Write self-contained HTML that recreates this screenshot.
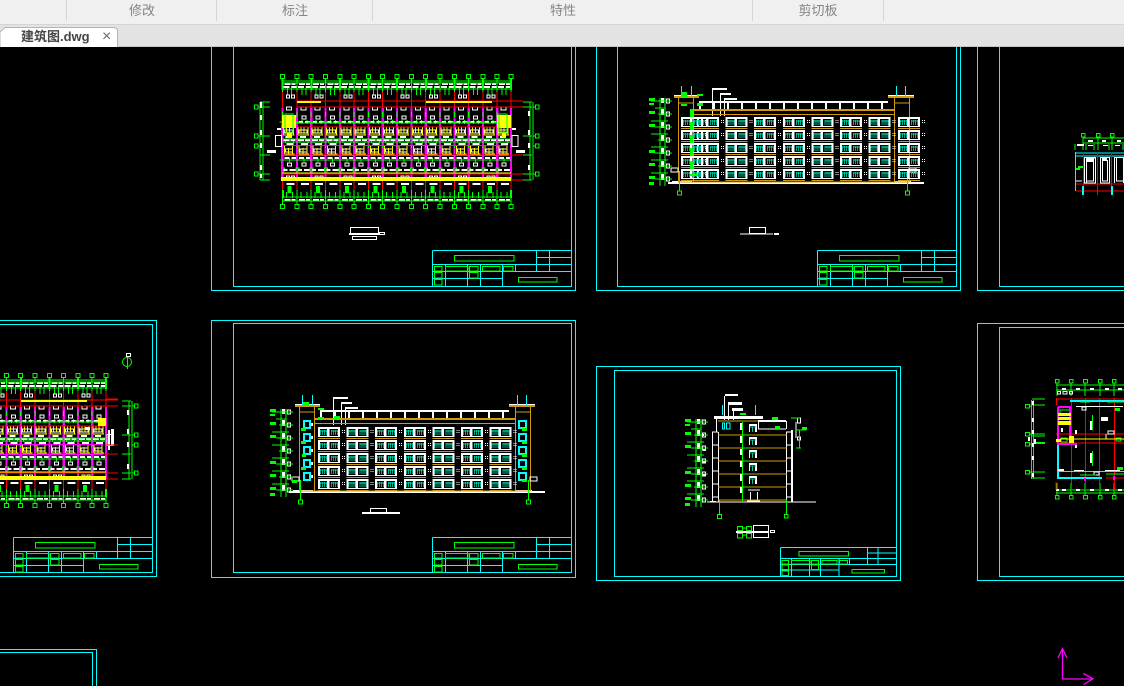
<!DOCTYPE html>
<html><head><meta charset="utf-8"><title>建筑图.dwg</title>
<style>
html,body{margin:0;padding:0;width:1124px;height:686px;overflow:hidden;background:#000;font-family:"Liberation Sans","Noto Sans CJK SC",sans-serif}
#cad{position:absolute;left:0;top:0}
#rib{position:absolute;left:0;top:0;width:1124px;height:24px;background:#f0f0f0;border-bottom:1px solid #d4d4d4}
#rib i{position:absolute;top:0;height:21px;width:1px;background:#d6d6d6}
#rib span{position:absolute;top:2px;font-size:13px;line-height:17px;color:#858585;transform:translateX(-50%);white-space:nowrap}
#tabs{position:absolute;left:0;top:25px;width:1124px;height:21px;background:#e3e3e3;border-bottom:1px solid #c4c4c4}
#tabsvg{position:absolute;left:0;top:0}
#tt{position:absolute;left:21px;top:3px;font-size:13px;line-height:17px;font-weight:700;color:#454545;white-space:nowrap}
#tx{position:absolute;left:102px;top:3px;font-size:16px;line-height:17px;color:#6a6a6a}
</style></head><body>
<svg id="cad" width="1124" height="686" viewBox="0 0 1124 686" shape-rendering="crispEdges" fill="none">
<defs>
<!-- title block -->
<g id="tb">
<path stroke="#0ff" d="M.5 .5H139 M.5 .5V36 M104.500 .5V21 M117.500 .5V21 M104.500 7.500H139 M.5 14.500H139 M.5 21.500H139 M.5 28.500H70 M13.500 14.500V36 M35.500 14.500V36 M48.500 14.500V36 M70.500 14.500V36 M83.500 14.500V21" vector-effect="non-scaling-stroke"/>
<path stroke="#0f0" d="M22.500 5.500H82V11H22.500Z M2.500 16.500H10V21H2.500Z M2.500 22.500H10V28H2.500Z M2.500 29.500H10V35H2.500Z M13.500 16.500H36V21H13.500Z M37.500 16.500H46V21H37.500Z M37.500 22.500H46V28H37.500Z M50.500 16.500H68V21H50.500Z M71.500 16.500H81V21H71.500Z M86.500 27.500H125V32H86.500Z" vector-effect="non-scaling-stroke"/>
</g>
<!-- plan bay -->
<g id="pb">
<path stroke="#f00" d="M0 92V190"/>
<path fill="#f0f" d="M-1 108h2.200v72h-2.200z"/>
<path stroke="#0f0" d="M-2 74.500h4v4h-4z M-2 204.500h4v4h-4z M0 78V92 M0 190V204 M5 86V95 M9 86V95 M4 192V198 M10 192V198 M0 112v5 M-3 122h6 M5 120v4 M10 120v4 M-3 160h6 M7 158v4 M0 145v3 M3 139v4 M11 139v4 M-1 168h3v3h-3z"/>
<path stroke="#fff" stroke-width="2" d="M2 84h6 M9 84h4 M1 87h6 M9 87h5 M2 122h4 M8 122h5 M1 140h6 M8 140h5 M2 158h5 M9 158h5 M1 170h4 M7 170h6 M2 200h6 M9 200h4 M4 184h8 M3 137h6 M4 144h7"/>
<path stroke="#fff" d="M5 116h4v3h-4z M5 163h4v3h-4z M4 107h5v3h-5z M2 130h8v3h-8z M3 149h7v3h-7z"/>
<path stroke="#ff0" d="M1 127V135 M4 127V133 M7 127V133 M11 127V135 M1 135H12 M2 146V154 M6 148V154 M10 146V154 M2 154H12"/>
</g>
<g id="pb2"><use href="#pb"/><use href="#pb" x="14.310"/><path stroke="#fff" d="M4 95h3v3h-3z M9 95h3v3h-3z M4 176h3v3h-3z M9 176h3v3h-3z"/><path fill="#0f0" d="M5 186h4v7h-4z"/></g>
<g id="pb4"><use href="#pb2"/><use href="#pb2" x="28.620"/><path fill="#0f0" d="M27.800 79h2v11h-2z M-1 79h2v11h-2z"/></g>
<g id="pb8"><use href="#pb4"/><use href="#pb4" x="57.250"/></g>
<g id="plan">
<g transform="translate(282.500 0)"><use href="#pb8"/><use href="#pb8" x="114.500"/></g>
<path stroke="#f00" d="M511 92V190"/>
<path fill="#f0f" d="M510 108h2v72h-2z M281 125h2v55h-2z"/>
<path stroke="#0f0" d="M509 74.500h4v4h-4z M509 204.500h4v4h-4z M511 78V92 M511 190V204"/>
<path fill="#0f0" d="M510 79h2v11h-2z M510 190h2v8h-2z M282 190h2v8h-2z"/>
<path stroke="#0f0" d="M282 81H511 M282 83H511 M282 89H511 M282 197H511 M282 201H511 M282 139H511 M282 142H511 M282 123H505 M282 160H511 M282 173H511"/>
<path stroke="#f00" d="M297 101H523 M297 107H523 M283 174H523 M283 180H523 M297 127H510 M283 155H523"/>
<path stroke="#ff0" d="M282 173H511"/>
<path fill="#ff0" d="M281 177h230v4h-230z M297 101h24v2h-24z M426 101h66v2h-66z"/>
<path fill="#f0f" d="M283 145h225v1h-225z M283 155h225v1h-225z"/>
</g>
<g id="planEnds">
<path fill="#ff0" d="M282 115h14v13h-14z M497 115h14v13h-14z M287 132h5v6h-5z M502 132h4v6h-4z"/>
<path stroke="#0f0" d="M285 114h8v18h-8z M499 114h8v18h-8z"/>
<path stroke="#fff" d="M275.500 135.500h6v11h-6z M512 135.500h6v11h-6z"/>
<path fill="#fff" d="M267 150h9v3h-9z M516 150h9v3h-9z M277 128h4v2h-4z M512 128h4v2h-4z"/>
</g>
<g id="planLeft">
<path stroke="#0f0" d="M254.500 105h3.500v4h-3.500z M254.500 134h3.500v4h-3.500z M254.500 144h3.500v4h-3.500z M254.500 172h3.500v4h-3.500z M260 102V180 M263 102V180 M258 107H260 M258 136H260 M258 146H260 M258 174H260 M260 102H270 M260 107H270 M260 136H270 M260 155H270 M260 174H270 M260 180H270"/>
<path fill="#fff" d="M260 102h2v6h-2z M260 115h2v5h-2z M260 130h2v5h-2z M260 143h2v5h-2z M260 165h2v5h-2z M260 174h2v4h-2z"/>
</g>
<g id="planRight">
<path stroke="#0f0" d="M535.500 105h3.500v4h-3.500z M535.500 134h3.500v4h-3.500z M535.500 144h3.500v4h-3.500z M535.500 172h3.500v4h-3.500z M530 102V180 M533 102V180 M533 107H536 M533 136H536 M533 146H536 M533 174H536 M523 102H532 M523 107H532 M523 136H532 M523 155H532 M523 174H532 M523 180H532"/>
<path fill="#fff" d="M528 111h2v5h-2z M528 130h2v5h-2z M528 143h2v5h-2z M528 165h2v5h-2z"/>
</g>
<!-- facade floor -->
<g id="fl">
<path fill="#fff" d="M0 0h10v2H0z M11 0h11v2H11z M0 0h2v10H0z M9 0h2.500v10H9z M20 0h2v10h-2z M0 9h22v1H0z"/>
<path stroke="#00a890" stroke-width="5" stroke-dasharray="1 1" d="M2 5.500h7 M13 5.500h7"/>
<path stroke="#00e0a0" d="M2 4h7 M13 4h7"/>
<path stroke="#d09a10" d="M0 11.500H22"/>
<path fill="#fff" d="M24 3h1v1h-1z M26 3h1v1h-1z M24 5h1v1h-1z M26 5h1v1h-1z"/>
</g>
<g id="col"><use href="#fl"/><use href="#fl" y="13"/><use href="#fl" y="26"/><use href="#fl" y="39"/><use href="#fl" y="52"/></g>
<g id="cols"><use href="#col"/><use href="#col" x="28.600"/><use href="#col" x="57.200"/><use href="#col" x="85.800"/><use href="#col" x="114.400"/><use href="#col" x="143"/><use href="#col" x="171.600"/></g>
<!-- left dim strip, 5 spans -->
<g id="dim">
<path stroke="#0f0" d="M0 0V88 M5 0V88"/>
<path fill="#fff" d="M1 0h3v5H1z M1 11h3v6H1z M1 24h3v6H1z M1 37h3v6H1z M1 50h3v6H1z M1 63h3v6H1z M1 76h3v6H1z"/>
<path stroke="#fff" d="M6.500 1h3v4h-3z M6.500 14h3v4h-3z M6.500 27h3v4h-3z M6.500 40h3v4h-3z M6.500 53h3v4h-3z M6.500 66h3v4h-3z M6.500 79h3v4h-3z"/>
<path stroke="#0f0" d="M-9 3H12 M-5 10H5 M-2 16H12 M-9 23H8 M-5 29H12 M-9 36H8 M-2 42H12 M-9 49H8 M-5 55H12 M-9 62H8 M-2 68H12 M-9 75H8 M-5 81H12"/>
<path fill="#0f0" d="M-11 0h6v3h-6z M-11 5h5v2h-5z M-11 13h6v3h-6z M-11 26h6v3h-6z M-11 52h6v3h-6z M-11 65h6v3h-6z M-11 78h6v3h-6z M-11 84h5v3h-5z"/>
</g>
<g id="elev">
<path stroke="#fff" stroke-width="2" d="M289 492H545"/>
<path fill="#fff" d="M320 410h189v2H320z M333 397h15v2h-15z M341 402h11v2h-11z M345 407h13v2h-13z M295 404h25v1h-25z M509 404h26v1h-26z M293 490h20v2h-20z M516 490h16v2h-16z"/>
<path stroke="#fff" d="M333.500 399V425 M341.500 404V425 M345.500 409V425 M334 419H340"/>
<path stroke="#fff" stroke-width="2" d="M321 411V419 M335 411V419 M349 411V419 M363 411V419 M377 411V419 M391 411V419 M405 411V419 M419 411V419 M433 411V419 M447 411V419 M461 411V419 M475 411V419 M489 411V419 M503 411V419"/>
<path fill="#d09a10" d="M314 418h201v2H314z M295 405h25v2h-25z M509 405h26v2h-26z M314 423h201v1H314z"/>
<path stroke="#d09a10" d="M299.500 407V491 M314.500 407V491 M515.500 407V491 M530.500 407V491 M299 491H530 M299 412H314 M515 412H530"/>
<path stroke="#0ff" d="M302.500 395V405 M312.500 395V405 M517.500 395V405 M526.500 395V405"/>
<path stroke="#0f0" d="M300.500 480V500 M528.500 480V500 M298.500 500h4v4h-4z M526.500 500h4v4h-4z"/>
<path stroke="#fff" d="M292 477h7v4h-7z M530 477h7v4h-7z"/>
</g>
</defs>

<!-- frames -->
<path stroke="#0ff" d="M211.500 0V290.500H575.500V0 M233.500 0V286.500H571.500V0"/>
<path stroke="#0ff" d="M596.500 0V290.500H960.500V0 M617.500 0V286.500H956.500V0"/>
<path stroke="#0ff" d="M977.500 0V290.500H1124 M999.500 0V286.500H1124"/>
<path stroke="#0ff" d="M0 320.500H156.500V576.500H0 M0 324.500H152.500V572.500H0"/>
<path stroke="#0ff" d="M211.500 320.500H575.500V577.500H211.500Z M233.500 323.500H571.500V572.500H233.500Z"/>
<path stroke="#0ff" d="M596.500 366.500H900.500V580.500H596.500Z M614.500 370.500H896.500V576.500H614.500Z"/>
<path stroke="#0ff" d="M1124 323.500H977.500V580.500H1124 M1124 327.500H999.500V576.500H1124"/>
<path stroke="#0ff" d="M0 649.500H96.500V686 M0 652.500H92.500V686"/>

<use href="#tb" x="432" y="250"/>
<use href="#tb" x="817" y="250"/>
<use href="#tb" x="13" y="537"/>
<use href="#tb" x="432" y="537"/>
<g transform="translate(780 547) scale(.835 .81)"><use href="#tb"/></g>

<!-- plan A -->
<use href="#plan"/><use href="#planEnds"/><use href="#planLeft"/><use href="#planRight"/>
<path stroke="#fff" d="M350.500 227.500h28v6h-28z M352.500 236.500h24v3h-24z M379.500 232.500h5v2h-5z"/>
<path stroke="#fff" stroke-width="2" d="M349 234H379"/>

<!-- plan D -->
<g transform="translate(-405 299)">
<use href="#plan"/>
<path fill="#ff0" d="M503 119h8v8h-8z"/>
<path stroke="#fff" d="M512 135.500h6v11h-6z"/>
<path fill="#fff" d="M490 128h5v3h-5z M516 130h3v16h-3z M513 131h2v20h-2z"/>
<path stroke="#f00" d="M511 100H523 M511 107H523 M511 146H523 M511 174H523 M511 180H523"/>
</g>
<g transform="translate(-401 299)"><use href="#planRight"/></g>
<path stroke="#0f0" d="M122.500 362a4.500 4.500 0 1 0 9 0a4.500 4.500 0 1 0-9 0 M127.500 356V369" shape-rendering="auto"/>
<path stroke="#fff" d="M126.500 353.500h4v3h-4z"/>

<!-- elevation E -->
<use href="#elev"/>
<g transform="translate(318 427)"><use href="#cols"/></g>
<use href="#dim" transform="translate(281 409)"/>
<path stroke="#0ff" stroke-width="2" d="M304 421h6v7h-6z M304 434h6v7h-6z M304 447h6v7h-6z M304 460h6v7h-6z M304 473h6v7h-6z M519 421h7v7h-7z M519 434h7v7h-7z M519 447h7v7h-7z M519 460h7v7h-7z M519 473h7v7h-7z"/>
<path fill="#0f0" d="M303 402h6v4h-6z M318 408h6v2h-6z M318 417h6v3h-6z M334 416h6v3h-6z M301 428h5v3h-5z M301 441h5v3h-5z M302 454h4v3h-4z M301 467h5v3h-5z M292 480h5v3h-5z M522 428h5v3h-5z M522 441h5v3h-5z M522 454h5v3h-5z M522 467h5v3h-5z M522 480h5v2h-5z"/>
<path fill="#fff" d="M311 423h2v3h-2z M311 436h2v3h-2z M311 449h2v3h-2z M311 462h2v3h-2z M311 475h2v3h-2z"/>
<path stroke="#fff" stroke-width="2" d="M362 513H400"/>
<path stroke="#fff" d="M370.500 508.500h16v5h-16z"/>

<!-- elevation B -->
<g transform="translate(379 -309)">
<use href="#elev"/>
<g transform="translate(318 426)"><use href="#cols"/></g>
<g transform="translate(302 426)"><use href="#fl"/><use href="#fl" y="13"/><use href="#fl" y="26"/><use href="#fl" y="39"/><use href="#fl" y="52"/></g>
<g transform="translate(519 426)"><use href="#fl"/><use href="#fl" y="13"/><use href="#fl" y="26"/><use href="#fl" y="39"/><use href="#fl" y="52"/></g>
<use href="#dim" transform="translate(281 407)"/>
<path fill="#0f0" d="M302 401h6v5h-6z M318 403h6v2h-6z M302 413h6v2h-6z M318 412h6v3h-6z M311 418h3v8h-3z M311 431h3v8h-3z M311 444h3v8h-3z M311 457h3v8h-3z M311 470h3v8h-3z M311 483h8v2h-8z"/>
</g>
<path stroke="#fff" d="M749.500 227.500h16v6h-16z"/>
<path stroke="#fff" d="M740 234H773"/>
<path fill="#fff" d="M774 233h5v2h-5z"/>

<!-- side elevation F -->
<path stroke="#fff" stroke-width="1" d="M707 502H816"/>
<path fill="#fff" d="M714 416h49v3h-49z M725 394h13v2h-13z M728 402h14v3h-14z M732 408h11v3h-11z M758 420h28v2h-28z M791 430h2v72h-2z M710 501h6v1h-6z"/>
<path stroke="#fff" d="M724.500 396V420 M733.500 411V420 M728.500 405V420 M758.500 421V429 M786.500 421V429 M758 429H786 M712.500 432V502 M718.500 432V502 M786.500 432V502 M791.500 432V502 M712 432H718 M712 445H718 M712 458H718 M712 471H718 M712 484H718 M712 497H718 M786 445H792 M786 458H792 M786 471H792 M786 484H792 M786 497H792 M786 432H792 M716.500 418V432 M797.500 418h3v5h-3z M797.500 437h3v3h-3z M748 490H760 M750.500 492V502 M757.500 492V502 M747 501H760 M796 422V438"/>
<path stroke="#d09a10" d="M718 435H787 M718 448H787 M718 461H787 M718 474H787 M718 487H787 M718 500H787 M718 421H758"/>
<path fill="#fff" d="M740 423h2v7h-2z M740 436h2v7h-2z M740 449h2v6h-2z M740 461h2v6h-2z M740 474h2v7h-2z M740 487h2v6h-2z M749 424h8v8h-8z M749 437h8v8h-8z M749 450h8v8h-8z M749 463h8v8h-8z M749 476h8v8h-8z"/>
<path fill="#000" d="M750 426h5v6h-5z M750 439h5v6h-5z M750 452h5v6h-5z M750 465h5v6h-5z M750 478h5v6h-5z"/>
<path stroke="#00c8a0" d="M750 427h6 M752.500 427V432 M750 440h6 M752.500 440V445 M750 453h6 M752.500 453V458 M750 466h6 M752.500 466V471 M750 479h6 M752.500 479V484"/>
<path stroke="#0ff" d="M722.500 405V415 M755.500 405V415 M722.500 423h2v6h-2z M726.500 423h3.500v6h-3.500z"/>
<path stroke="#0f0" d="M742.500 422V502 M742 435H750 M742 448H750 M742 461H750 M742 474H750 M742 487H750 M719.500 500V514 M717.500 514.500h4v4h-4z M786.500 500V514 M784.500 514.500h3.500v3.500h-3.500z M799.500 430V448 M796 448H801 M796 430H806 M791 418H800"/>
<path fill="#0f0" d="M740 413h6v2h-6z M772 417h6v3h-6z M775 426h5v3h-5z M802 427h5v3h-5z"/>
<use href="#dim" transform="translate(696 419)"/>
<path fill="#fff" d="M702 434h2v2h-2z M703 449h3v2h-3z M703 461h3v2h-3z M703 474h3v2h-3z"/>
<path stroke="#fff" d="M753.500 525.500h15v12h-15z M770.500 530.500h4v2h-4z"/>
<path fill="#fff" d="M736 531h33v2h-33z"/>
<path stroke="#0f0" d="M737.500 526.500h5v4h-5z M746.500 526.500h5v4h-5z M737.500 533.500h5v4.500h-5z M746.500 533.500h5v4.500h-5z M742 528H747 M742 535H747"/>

<!-- plan G -->
<path stroke="#0f0" d="M1055.500 379.500h3.500v3.500h-3.500z M1069.500 379.500h3.500v3.500h-3.500z M1083.500 379.500h4v3.500h-4z M1098.500 379.500h3.500v3.500h-3.500z M1112.500 379.500h3.500v3.500h-3.500z M1055.500 495.500h3.500v3.500h-3.500z M1069.500 495.500h3.500v3.500h-3.500z M1083.500 495.500h4v3.500h-4z M1098.500 495.500h3.500v3.500h-3.500z M1112.500 495.500h3.500v3.500h-3.500z M1057 383V396 M1071 383V396 M1085 383V396 M1100 383V396 M1114 383V396 M1057 483V495 M1071 483V495 M1085 483V495 M1100 483V495 M1114 483V495 M1056 385H1124 M1056 390H1124 M1056 490H1124 M1056 493H1124"/>
<path fill="#fff" d="M1062 388h4v2h-4z M1076 388h4v2h-4z M1090 388h4v2h-4z M1105 388h4v2h-4z M1118 388h4v2h-4z M1056 489h3v2h-3z M1062 489h4v2h-4z M1076 489h4v2h-4z M1090 489h4v2h-4z M1105 489h4v2h-4z M1118 489h4v2h-4z"/>
<path stroke="#fff" d="M1057.500 391.500h3v2.500h-3z M1063 391.500h4v2.500h-4z M1069.500 391.500h3v2.500h-3z"/>
<path stroke="#f00" d="M1056.500 398V405 M1056 482V490 M1071.500 398V490 M1085.500 398V490 M1099.500 398V490 M1114.500 398V490 M1056 399H1124 M1056 434H1124 M1056 443H1124 M1106 478H1124"/>
<path fill="#0ff" d="M1070 400h54v2h-54z M1057 445h2v33h-2z M1057 477h45v2h-45z M1058 471h66v1h-66z"/>
<path fill="#fff" d="M1076 406h47v1h-47z M1058 469h6v2h-6z M1074 470h10v1h-10z M1105 470h15v1h-15z M1090 421h2v9h-2z M1090 453h2v10h-2z M1101 417h7v4h-7z M1061 428h2v4h-2z M1075 430h2v4h-2z M1075 445h2v3h-2z"/>
<path stroke="#fff" d="M1082 407h4v3h-4z M1108 431h6v3h-6z M1106 434v5 M1094 472h5v3h-5z"/>
<path stroke="#0f0" d="M1092.500 415V430 M1092.500 451V466 M1080 402H1090 M1107 402H1124 M1080 475H1096 M1106 474H1124 M1060 410h10v5h-10z M1061 438h6v4h-6z M1116 438h5v3h-5z"/>
<path stroke="#f0f" stroke-width="2" d="M1058 407V445 M1070 406V445 M1058 407H1070 M1058 444H1077 M1085 478V481 M1114 476V480"/>
<path fill="#ff0" d="M1058 413h13v3h-13z M1058 417h13v3h-13z M1058 421h13v4h-13z M1056 439h5v3h-5z M1069 436h5v7h-5z"/>
<path stroke="#ff0" d="M1060 439H1124"/>
<path fill="#0f0" d="M1115 408h5v3h-5z M1117 467h6v3h-6z"/>
<path stroke="#0f0" d="M1025.500 404.500h4v3.500h-4z M1025.500 432.500h4v3.500h-4z M1025.500 442.500h4v3.500h-4z M1025.500 470.500h4v3.500h-4z M1031.500 400V479 M1033.500 400V479 M1029 406H1032 M1029 434H1032 M1029 444H1032 M1029 472H1032 M1032 399H1045 M1032 405H1045 M1032 434H1045 M1032 436H1045 M1032 472H1045 M1032 478H1045"/>
<path fill="#fff" d="M1032 401h2v4h-2z M1032 418h2v4h-2z M1032 430h2v4h-2z M1034 439h2v5h-2z M1032 443h2v4h-2z M1032 456h2v4h-2z M1032 473h2v4h-2z M1028 437h2v4h-2z"/>
<path fill="#0f0" d="M1036 442h9v2h-9z"/>

<!-- plan C fragment -->
<path stroke="#0f0" d="M1081.500 133.500h3.500v3.500h-3.500z M1096.500 133.500h3.500v3.500h-3.500z M1110.500 133.500h3.500v3.500h-3.500z M1083 137V150 M1098 137V150 M1112 137V150 M1083 138H1124 M1083 143H1124 M1075 144V150 M1086 144V150 M1094 144V150 M1109 144V150 M1123 144V150"/>
<path fill="#fff" d="M1077 144h7v2h-7z M1088 140h5v2h-5z M1102 140h4v2h-4z M1117 140h4v2h-4z M1088 145h5v1h-5z M1103 145h5v1h-5z M1115 145h5v1h-5z"/>
<path stroke="#0ff" d="M1075.500 152V191 M1075 153H1124 M1075 156H1124"/>
<path stroke="#f00" d="M1083.500 152V195 M1097.500 152V195 M1111.500 152V195 M1076 184H1124 M1076 191H1124"/>
<path stroke="#fff" d="M1076 181H1082 M1084.500 158V183 M1086.500 158V183 M1095.500 158V183 M1093.500 158V181 M1086 181H1094 M1084 183H1096 M1100.500 158V183 M1102.500 158V181 M1109.500 158V183 M1107.500 160V181 M1102 181H1108 M1100 183H1110 M1114.500 158V183 M1116.500 158V181 M1123.500 158V183 M1116 181H1124 M1087 158H1095 M1087 160H1093"/>
<path fill="#fff" d="M1084 157h12v1h-12z M1100 157h10v1h-10z M1114 157h10v1h-10z M1087 158h6v4h-6z M1103 158h4v3h-4z"/>
<path fill="#0f0" d="M1076 168h4v2h-4z M1078 166h5v2h-5z"/>
<path fill="#0ff" d="M1082 186h2v9h-2z M1111 186h2v9h-2z"/>

<!-- UCS icon -->
<path stroke="#f0f" stroke-width="1.300" shape-rendering="auto" d="M1062.500 649V679H1093M1058 658L1062.500 648.500L1067 658M1083.500 673.500L1093 678.800L1083.500 684.500"/>
</svg>

<div id="rib">
<i style="left:66px"></i><i style="left:216px"></i><i style="left:372px"></i><i style="left:752px"></i><i style="left:883px"></i>
<span style="left:142px">修改</span><span style="left:295px">标注</span><span style="left:563px">特性</span><span style="left:818px">剪切板</span>
</div>
<div id="tabs">
<svg id="tabsvg" width="120" height="22"><path d="M0 21.500V7L5 2.500H113Q117.500 2.500 117.500 6V21.500" fill="#fff" stroke="#b4b4b4"/><path d="M1 21.500H117" stroke="#fff"/></svg>
<div id="tt">建筑图.dwg</div>
<div id="tx">×</div>
</div>
</body></html>
